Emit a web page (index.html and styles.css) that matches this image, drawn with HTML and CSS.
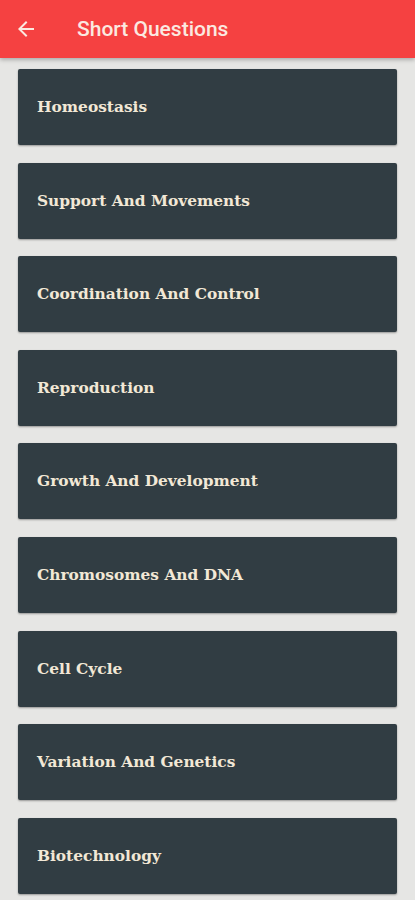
FILE: index.html
```html
<!DOCTYPE html>
<html>
<head>
<meta charset="utf-8">
<link rel="stylesheet" href="styles.css">
</head>
<body>
<header class="appbar">
  <svg class="back" width="24" height="24" viewBox="0 0 24 24"><path d="M20 11H7.83l5.59-5.59L12 4l-8 8 8 8 1.41-1.41L7.83 13H20v-2z" fill="#fbe9e0"/></svg>
  <h1 class="title">Short Questions</h1>
</header>
<main class="list">
  <div class="card">Homeostasis</div>
  <div class="card">Support And Movements</div>
  <div class="card">Coordination And Control</div>
  <div class="card">Reproduction</div>
  <div class="card">Growth And Development</div>
  <div class="card">Chromosomes And DNA</div>
  <div class="card">Cell Cycle</div>
  <div class="card">Variation And Genetics</div>
  <div class="card">Biotechnology</div>
</main>
</body>
</html>
```
FILE: styles.css
```css
html, body { margin: 0; padding: 0; }
body { background: #e6e6e4; width: 415px; height: 900px; overflow: hidden; }
.appbar {
  height: 58px;
  background: #f54141;
  display: flex;
  align-items: center;
  box-shadow: 0 2px 4px rgba(0,0,0,0.25);
  position: relative;
  z-index: 1;
}
.back { margin-left: 14px; width: 24px; height: 24px; }
.title {
  margin: 0 0 0 39px;
  font-family: Roboto, "Noto Sans", sans-serif;
  font-weight: 500;
  font-size: 21px;
  color: #fbe9e0;
}
.list {
  display: flex;
  flex-direction: column;
  gap: 17.6px;
  padding: 11px 18px 0 18px;
}
.card {
  height: 76px;
  background: #313d43;
  border-radius: 2px;
  box-shadow: 0 1px 2px rgba(0,0,0,0.35);
  display: flex;
  align-items: center;
  padding-left: 19px;
  font-family: "DejaVu Serif", serif;
  font-weight: bold;
  font-size: 15.4px;
  color: #f2e8d6;
}
```
